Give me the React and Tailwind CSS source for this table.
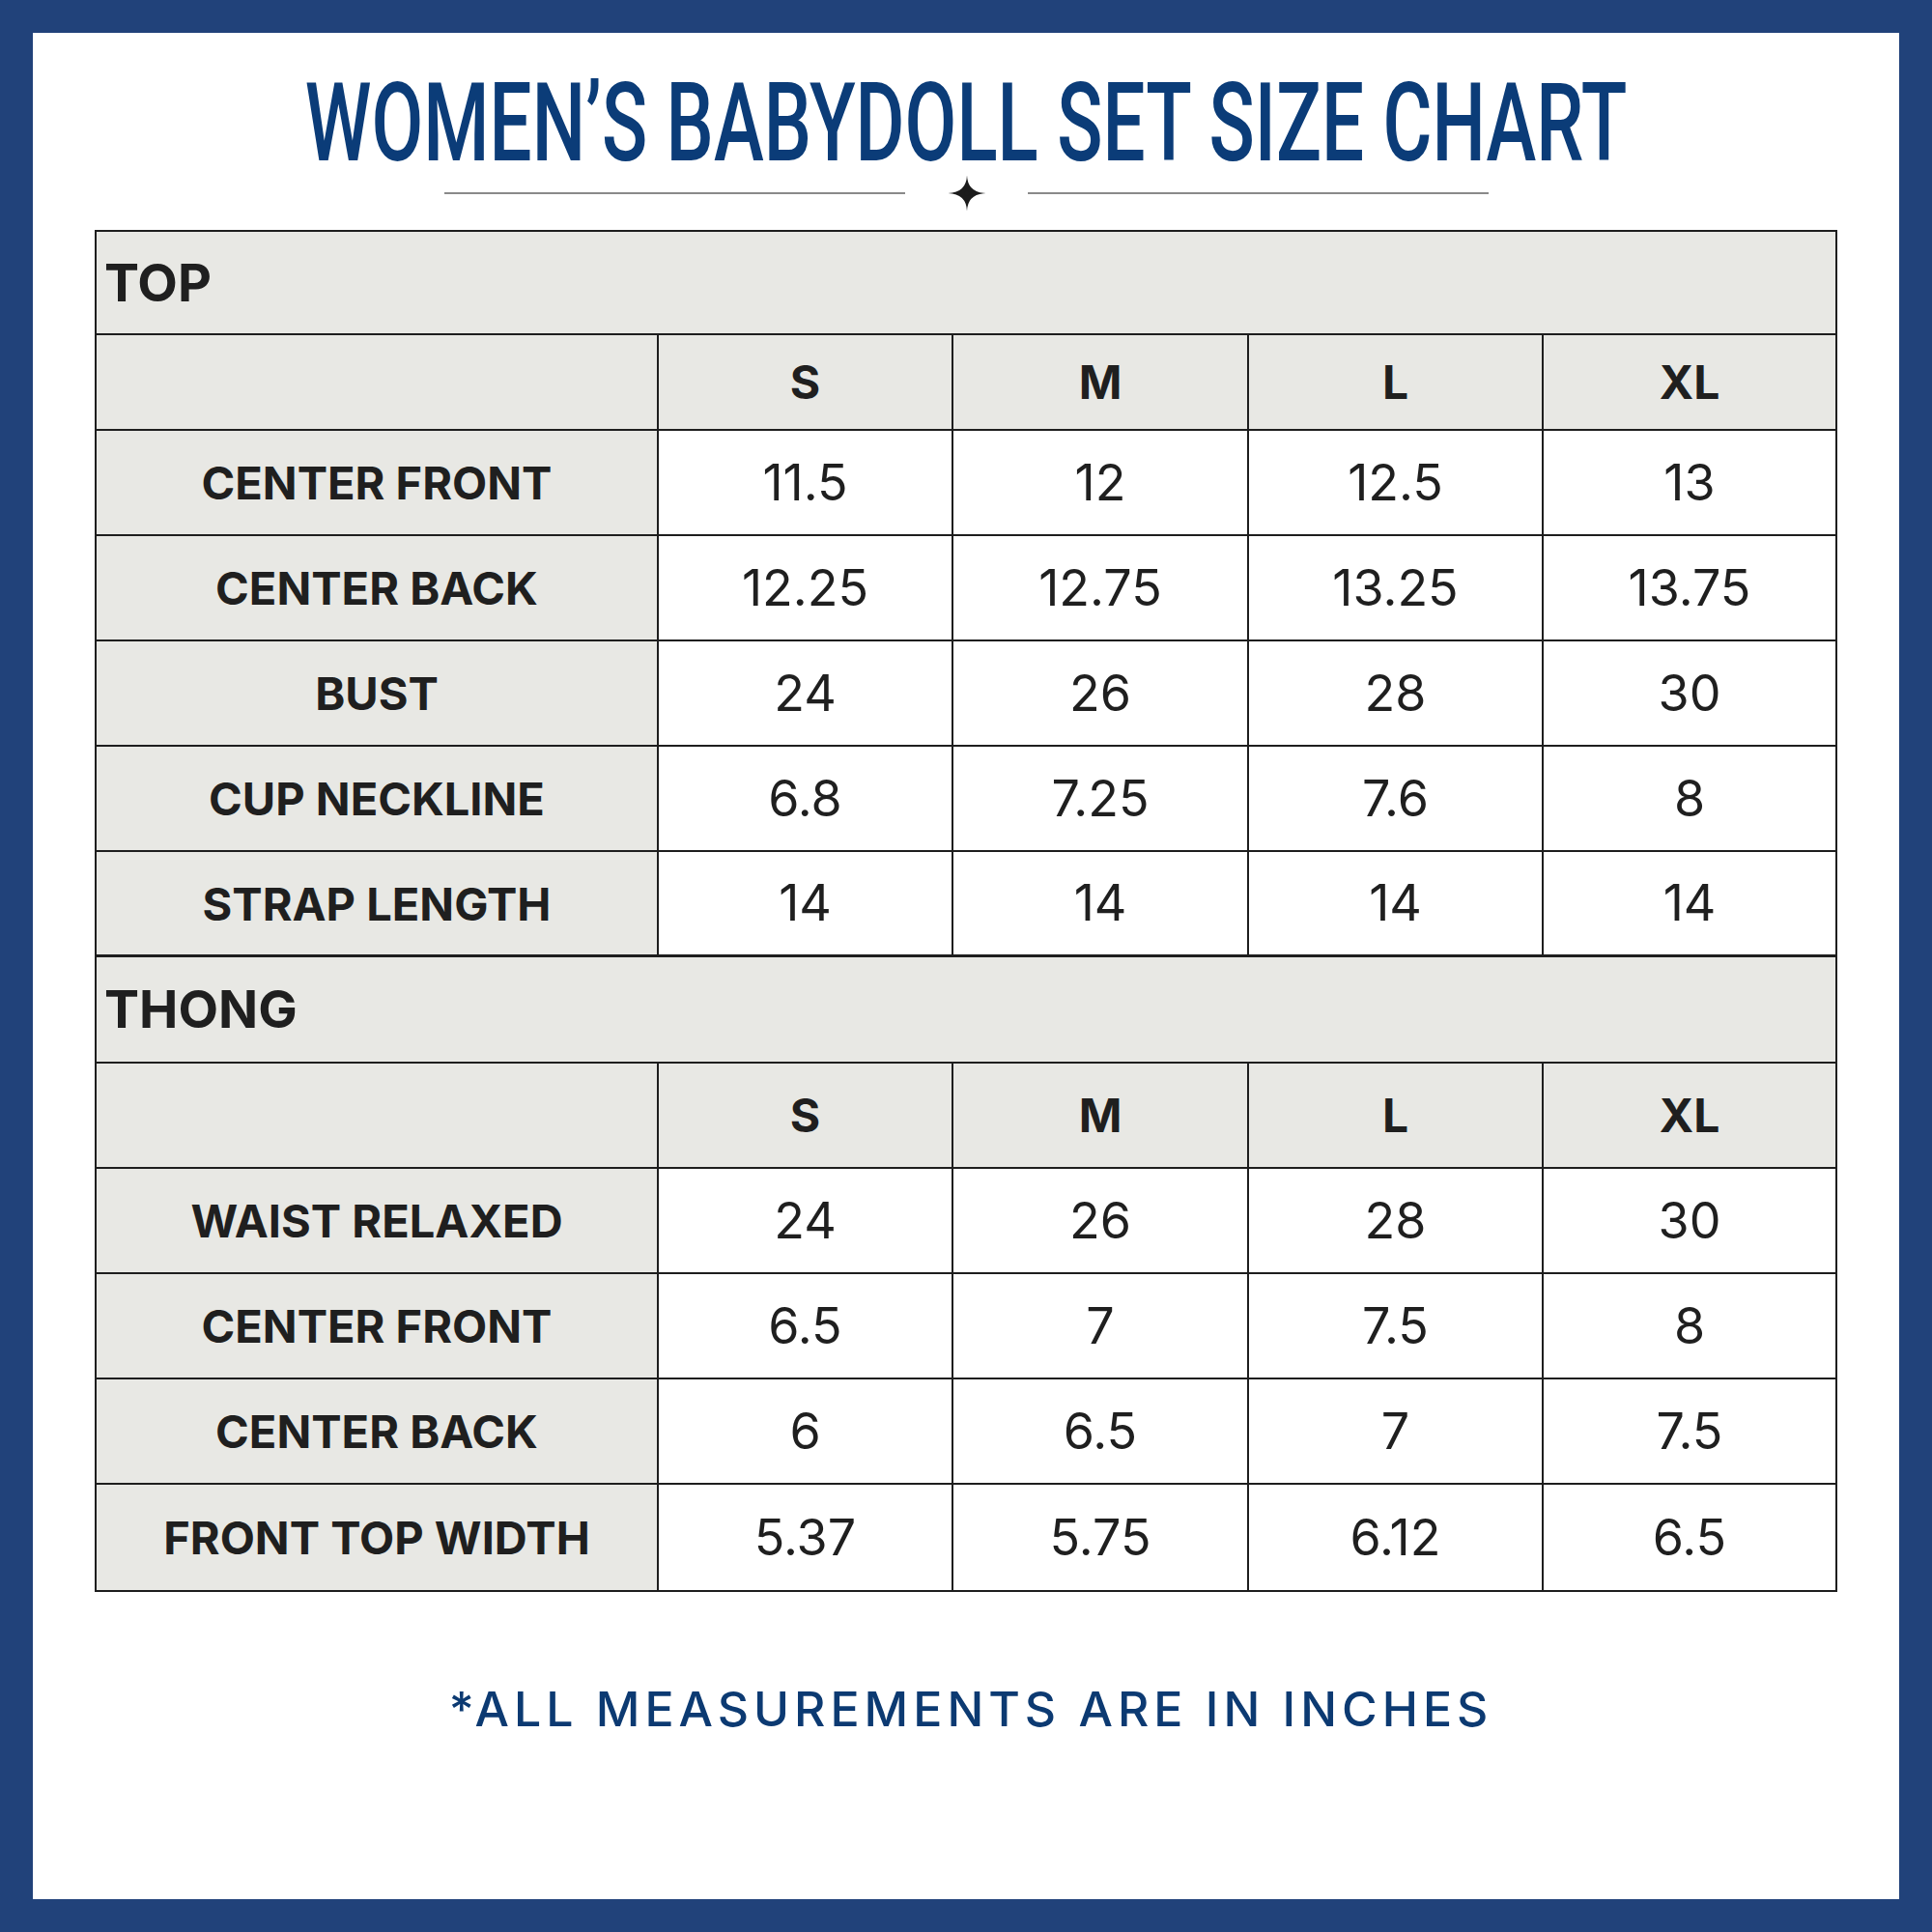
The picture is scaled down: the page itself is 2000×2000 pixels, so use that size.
import React from 'react';

const sections = [
  {
    title: 'TOP',
    rows: [
      ['CENTER FRONT', '11.5', '12', '12.5', '13'],
      ['CENTER BACK', '12.25', '12.75', '13.25', '13.75'],
      ['BUST', '24', '26', '28', '30'],
      ['CUP NECKLINE', '6.8', '7.25', '7.6', '8'],
      ['STRAP LENGTH', '14', '14', '14', '14'],
    ],
  },
  {
    title: 'THONG',
    rows: [
      ['WAIST RELAXED', '24', '26', '28', '30'],
      ['CENTER FRONT', '6.5', '7', '7.5', '8'],
      ['CENTER BACK', '6', '6.5', '7', '7.5'],
      ['FRONT TOP WIDTH', '5.37', '5.75', '6.12', '6.5'],
    ],
  },
];

const sizes = ['S', 'M', 'L', 'XL'];

function Sparkle() {
  return (
    <svg width="40" height="38" viewBox="-20 -19 40 38">
      <path
        d="M0 -18.5 Q0.7 -0.7 19.5 0 Q0.7 0.7 0 18.5 Q-0.7 0.7 -19.5 0 Q-0.7 -0.7 0 -18.5Z"
        fill="#1c1c1c"
      />
      <circle cx="0" cy="0" r="2.4" fill="#1c1c1c" />
    </svg>
  );
}

function Section({ section, last }) {
  return (
    <>
      {/* section title */}
      <div className={`flex items-center bg-[#e8e8e4] border-b-2 border-[#1e1e1e] pl-[8px] ${section.title === 'TOP' ? 'h-[107px]' : 'h-[110px]'}`}>
        <span className="text-[54px] font-bold leading-none text-[#1f1f1f]">{section.title}</span>
      </div>

      {/* size header */}
      <div className={`grid grid-cols-[582px_305px_306px_305px_1fr] border-b-2 border-[#1e1e1e] ${section.title === 'TOP' ? 'h-[99px]' : 'h-[109px]'}`}>
        <div className="bg-[#e8e8e4] border-r-2 border-[#1e1e1e]" />
        {sizes.map((s, i) => (
          <div
            key={s}
            className={`flex items-center justify-center bg-[#e8e8e4] ${i < 3 ? 'border-r-2 border-[#1e1e1e]' : ''}`}
          >
            <span className="text-[48px] font-bold leading-none text-[#1f1f1f]">{s}</span>
          </div>
        ))}
      </div>

      {/* measurement rows */}
      {section.rows.map((row, r) => {
        const isLast = r === section.rows.length - 1;
        return (
          <div
            key={row[0]}
            className={`grid grid-cols-[582px_305px_306px_305px_1fr] h-[109px] ${
              isLast ? (last ? '' : 'border-b-[3px] border-[#1e1e1e]') : 'border-b-2 border-[#1e1e1e]'
            }`}
          >
            <div className="flex items-center justify-center bg-[#e8e8e4] border-r-2 border-[#1e1e1e]">
              <span className="text-[47px] font-bold leading-none text-[#1f1f1f]">{row[0]}</span>
            </div>
            {row.slice(1).map((v, i) => (
              <div
                key={i}
                className={`flex items-center justify-center bg-white ${i < 3 ? 'border-r-2 border-[#1e1e1e]' : ''}`}
              >
                <span className="text-[52px] font-normal leading-none text-[#1f1f1f]">{v}</span>
              </div>
            ))}
          </div>
        );
      })}
    </>
  );
}

export default function App() {
  return (
    <div className="w-[2000px] h-[2000px] bg-[#21427a] p-[34px]" style={{ fontFamily: 'Inter, "Noto Sans", sans-serif' }}>
      <div className="w-full h-full bg-white flex flex-col items-center px-[64px] pt-[39px]">
        {/* Title */}
        <h1
          className="whitespace-nowrap text-[114px] leading-[108px] font-medium text-[#0b3c78] scale-x-[0.685]"
          style={{ fontFamily: 'Roboto, "Liberation Sans", sans-serif' }}
        >
          WOMEN’S BABYDOLL SET SIZE CHART
        </h1>

        {/* divider */}
        <div className="flex items-center h-[38px]">
          <div className="w-[477px] h-[2px] bg-[#8a8a8a]" />
          <div className="ml-[44px] mr-[43px] flex items-center">
            <Sparkle />
          </div>
          <div className="w-[477px] h-[2px] bg-[#8a8a8a]" />
        </div>

        {/* Table */}
        <div className="w-full mt-[19px] border-2 border-[#1e1e1e]">
          {sections.map((s, i) => (
            <Section key={s.title} section={s} last={i === sections.length - 1} />
          ))}
        </div>

        {/* Footer note */}
        <p className="mt-[96px] pl-[10px] text-[50px] leading-none font-medium tracking-[0.10em] text-[#0c3a72]">
          *ALL MEASUREMENTS ARE IN INCHES
        </p>
      </div>
    </div>
  );
}
